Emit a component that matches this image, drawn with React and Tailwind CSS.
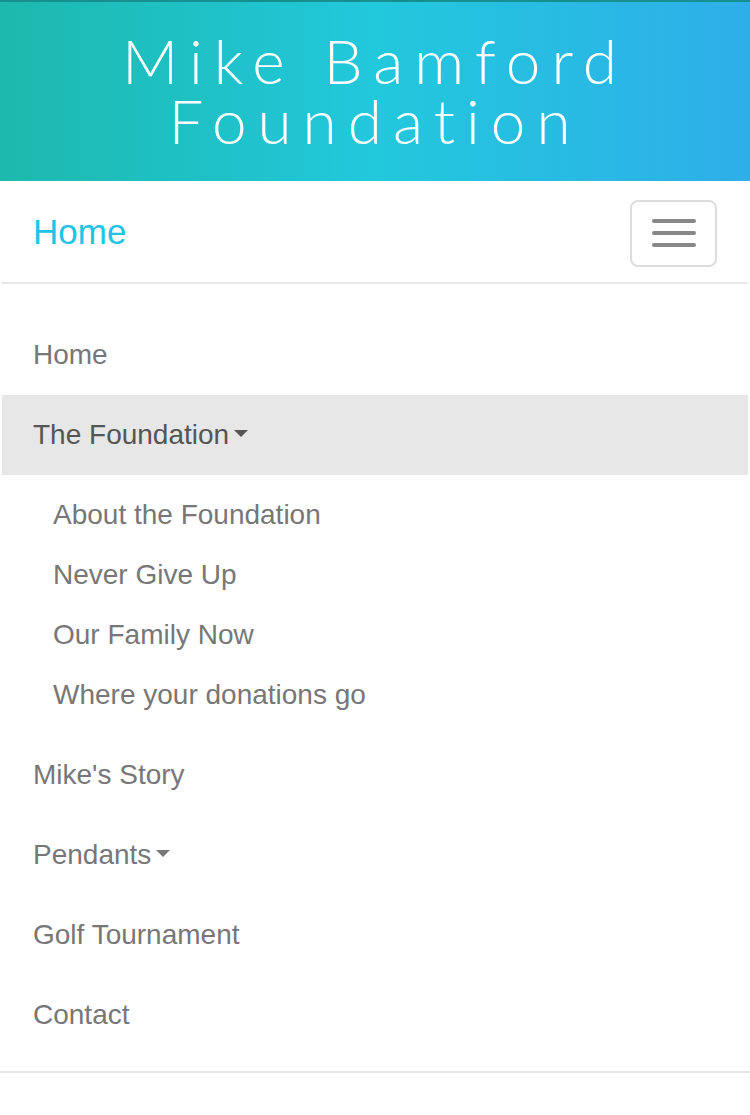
import React from "react";

const Caret = () => (
  <span className="inline-block ml-[5px] align-middle w-0 h-0 border-l-[7px] border-r-[7px] border-t-[7px] border-l-transparent border-r-transparent border-t-current relative top-[-2px]" />
);

const Item = ({ children, active, caret }) => (
  <li
    className={
      "h-[80px] flex items-center px-[31px] " +
      (active ? "bg-[#e7e7e7] text-[#555]" : "text-[#777]")
    }
  >
    <span>{children}</span>
    {caret && <Caret />}
  </li>
);

export default function App() {
  return (
    <div
      className="w-[750px] min-h-[1115px] bg-white"
      style={{ fontFamily: '"Liberation Sans", Arial, sans-serif' }}
    >
      <header className="h-[181px] border-t-2 border-[#178f8f] bg-gradient-to-r from-[#1db9ad] via-[#22c8dc] to-[#2eaee9] flex flex-col items-center justify-center text-white">
        <div
          className="text-[62px] leading-[60px] font-light tracking-[0.178em] text-center mt-[-4px]"
          style={{ fontFamily: 'Lato, "Noto Sans", sans-serif' }}
        >
          <div>Mike Bamford</div>
          <div>Foundation</div>
        </div>
      </header>

      <nav className="h-[103px] mx-[2px] border-b-2 border-[#e7e7e7] flex items-center justify-between pl-[31px] pr-[31px]">
        <span className="text-[35px] text-[#22c3e6] mt-[2px]">Home</span>
        <button className="w-[87px] h-[67px] mt-[3px] border-2 border-[#ddd] rounded-[8px] flex flex-col items-center justify-center gap-[8px]">
          <span className="block w-[44px] h-[4px] rounded-full bg-[#888]" />
          <span className="block w-[44px] h-[4px] rounded-full bg-[#888]" />
          <span className="block w-[44px] h-[4px] rounded-full bg-[#888]" />
        </button>
      </nav>

      <ul className="pt-[31px] text-[28px] mx-[2px]">
        <Item>Home</Item>
        <Item active caret>The Foundation</Item>
        <li className="py-[10px] text-[#777]">
          <ul>
            {[
              "About the Foundation",
              "Never Give Up",
              "Our Family Now",
              "Where your donations go",
            ].map((t) => (
              <li key={t} className="h-[60px] flex items-center pl-[51px]">
                {t}
              </li>
            ))}
          </ul>
        </li>
        <Item>Mike's Story</Item>
        <Item caret>Pendants</Item>
        <Item>Golf Tournament</Item>
        <Item>Contact</Item>
      </ul>
      <div className="mt-[16px] border-b-2 border-[#e7e7e7]" />
    </div>
  );
}
